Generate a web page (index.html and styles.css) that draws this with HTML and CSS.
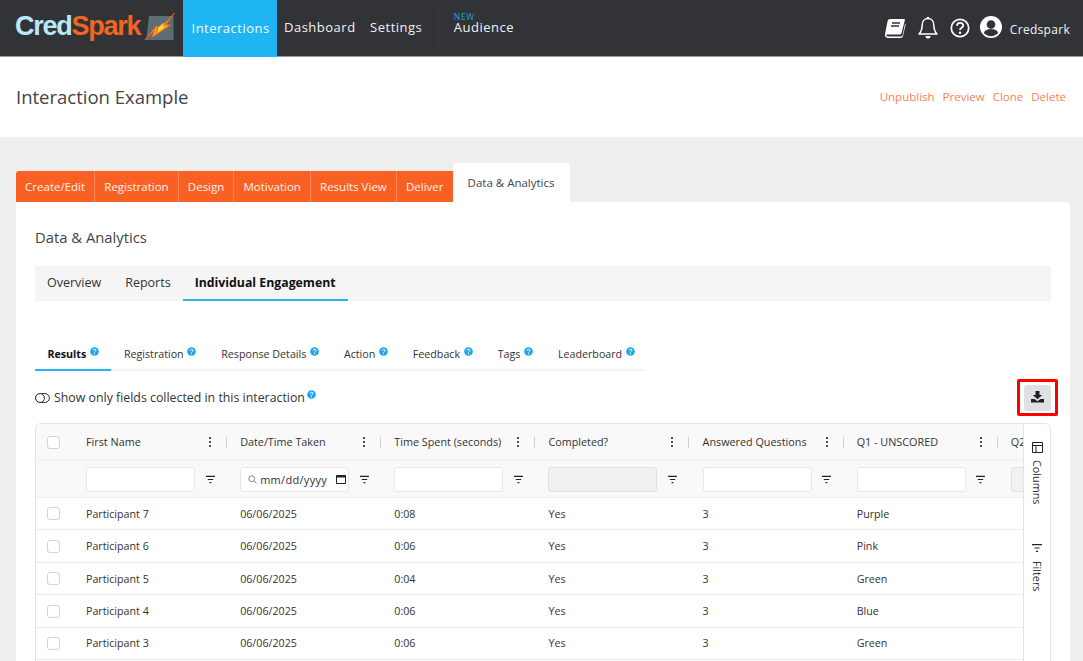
FILE: index.html
```html
<!DOCTYPE html>
<html lang="en">
<head>
<meta charset="utf-8">
<title>Interaction Example</title>
<link rel="stylesheet" href="styles.css">
</head>
<body>
<svg class="defs" width="0" height="0" aria-hidden="true">
  <symbol id="funnel" viewBox="0 0 12 10"><path d="M1 1.500h10M3 5h6M5 8.500h2" fill="none" stroke="currentColor" stroke-width="1.300"/></symbol>
  <symbol id="kebab" viewBox="0 0 4 12"><circle cx="2" cy="2" r="1.100"/><circle cx="2" cy="6" r="1.100"/><circle cx="2" cy="10" r="1.100"/></symbol>
  <symbol id="hint" viewBox="0 0 10 10"><circle cx="5" cy="5" r="4.800" fill="#1ea7e8"/><path d="M3.500 4c0-2 3.200-2 3.200-.2 0 1.100-1.700 1.100-1.700 2.300" fill="none" stroke="#fff" stroke-width="1.100"/><circle cx="5" cy="7.600" r=".7" fill="#fff"/></symbol>
</svg>

<header class="topbar">
  <div class="logo">
    <span class="logo-text"><span class="logo-cred">Cred</span><span class="logo-spark">Spark</span></span>
    <svg class="logo-mark" viewBox="0 0 32 28" width="32" height="28">
      <path d="M6 3h24.500v24H1l2.500-2.500z" fill="#5a6e76"/>
      <path d="M2 27 14 12l.8 5.500L31.500 0 23 11.500l4.500.6L9 24.500l2-6.500z" fill="#f7941d" stroke="#f15a22" stroke-width=".8"/>
      <path d="M15 14.500l6.500-5.500-2 4.200 3 .2-7.500 6z" fill="#ffd23f"/>
    </svg>
  </div>
  <nav class="mainnav">
    <a class="mainnav-item is-active">Interactions</a>
    <a class="mainnav-item">Dashboard</a>
    <a class="mainnav-item">Settings</a>
    <a class="mainnav-item has-badge"><span class="badge-new">NEW</span>Audience</a>
  </nav>
  <div class="userbar">
    <svg class="ico" width="22" height="20" viewBox="0 0 22 20"><path d="M6 1h14c1 0 1 .8.8 1.500L17.500 15c-.3 1-.9 1.500-2 1.500H4c-1.200 0-1.700.6-1.600 1 .1.600.7.900 1.600.900h13c.7 0 1.200-.3 1.500-1l2.600-12c.5.500.6 1 .4 1.800l-2.500 10.700c-.3 1.200-1 2-2.400 2H4C1.800 20 .5 18.500 1 16.300L3.500 3.500C3.900 1.800 4.800 1 6 1z" fill="#fff"/><path d="M8 5h8M7 8h8" stroke="#323337" stroke-width="1.300"/></svg>
    <svg class="ico" width="22" height="24" viewBox="0 0 22 24"><path d="M11 2.500c3.700 0 5.800 2.800 5.800 6.500 0 4.500 1.200 6.800 3.200 9H2c2-2.200 3.200-4.500 3.200-9 0-3.700 2.100-6.500 5.800-6.500z" fill="none" stroke="#fff" stroke-width="1.500" stroke-linejoin="round"/><path d="M8.500 20a2.500 2.500 0 0 0 5 0z" fill="#fff"/><circle cx="11" cy="2" r="1.200" fill="#fff"/></svg>
    <svg class="ico" width="20" height="20" viewBox="0 0 20 20"><circle cx="10" cy="10" r="8.700" fill="none" stroke="#fff" stroke-width="1.700"/><path d="M7 7.800c0-3.800 6.200-3.800 6.200-.3 0 2.300-3.200 2.200-3.200 4.500" fill="none" stroke="#fff" stroke-width="1.900"/><circle cx="10" cy="14.700" r="1.200" fill="#fff"/></svg>
    <svg class="ico" width="22" height="22" viewBox="0 0 22 22"><circle cx="11" cy="11" r="11" fill="#fff"/><circle cx="11" cy="8.500" r="4.300" fill="#323337"/><path d="M3.800 17c1-3 3.600-4 7.200-4s6.200 1 7.200 4c-1.800 2-4.300 3.200-7.200 3.200S5.600 19 3.800 17z" fill="#323337"/></svg>
    <span class="username">Credspark</span>
  </div>
</header>

<section class="pagehead">
  <h1 class="pagehead-title">Interaction Example</h1>
  <div class="pagehead-actions">
    <a>Unpublish</a><a>Preview</a><a>Clone</a><a>Delete</a>
  </div>
</section>

<main class="content">
  <div class="steps">
    <a class="step">Create/Edit</a>
    <a class="step">Registration</a>
    <a class="step">Design</a>
    <a class="step">Motivation</a>
    <a class="step">Results View</a>
    <a class="step step-last">Deliver</a>
    <a class="step-active">Data &amp; Analytics</a>
  </div>

  <div class="card">
    <h2 class="card-title">Data &amp; Analytics</h2>
    <div class="subnav">
      <a class="subnav-item">Overview</a>
      <a class="subnav-item">Reports</a>
      <a class="subnav-item is-active">Individual Engagement</a>
    </div>

    <div class="resulttabs">
      <a class="resulttab is-active">Results <svg class="hint"><use href="#hint"/></svg></a>
      <a class="resulttab">Registration <svg class="hint"><use href="#hint"/></svg></a>
      <a class="resulttab">Response Details <svg class="hint"><use href="#hint"/></svg></a>
      <a class="resulttab">Action <svg class="hint"><use href="#hint"/></svg></a>
      <a class="resulttab">Feedback <svg class="hint"><use href="#hint"/></svg></a>
      <a class="resulttab">Tags <svg class="hint"><use href="#hint"/></svg></a>
      <a class="resulttab">Leaderboard <svg class="hint"><use href="#hint"/></svg></a>
    </div>

    <div class="toolbar">
      <div class="toggle-row">
        <svg class="toggle" width="15" height="10" viewBox="0 0 15 10"><rect x=".6" y=".6" width="13.800" height="8.800" rx="4.400" fill="none" stroke="#333" stroke-width="1"/><circle cx="5" cy="5" r="4.400" fill="#fff" stroke="#333" stroke-width="1"/></svg>
        <span>Show only fields collected in this interaction</span>
        <svg class="hint hint-lg"><use href="#hint"/></svg>
      </div>
      <div class="download-frame">
        <button class="download" type="button" aria-label="Download">
          <svg class="download-ico" width="13" height="12" viewBox="0 0 13 12"><path d="M4.500 0h4v4h2.700L6.500 8.300 1.800 4h2.700z" fill="#222"/><path d="M0 8h3.500l3 2.200 3-2.200H13v3.500H0z" fill="#222"/></svg>
        </button>
      </div>
    </div>

    <div class="table">
      <div class="table-main">
        <div class="t-row t-head">
          <div class="t-check"><span class="checkbox"></span></div>
          <div class="th"><span class="th-label">First Name</span><svg class="kebab"><use href="#kebab"/></svg><i class="th-sep"></i></div>
          <div class="th"><span class="th-label">Date/Time Taken</span><svg class="kebab"><use href="#kebab"/></svg><i class="th-sep"></i></div>
          <div class="th"><span class="th-label">Time Spent (seconds)</span><svg class="kebab"><use href="#kebab"/></svg><i class="th-sep"></i></div>
          <div class="th"><span class="th-label">Completed?</span><svg class="kebab"><use href="#kebab"/></svg><i class="th-sep"></i></div>
          <div class="th"><span class="th-label">Answered Questions</span><svg class="kebab"><use href="#kebab"/></svg><i class="th-sep"></i></div>
          <div class="th"><span class="th-label">Q1 - UNSCORED</span><svg class="kebab"><use href="#kebab"/></svg><i class="th-sep"></i></div>
          <div class="th"><span class="th-label">Q2</span></div>
        </div>
        <div class="t-row t-filter">
          <div class="t-check"></div>
          <div class="tf"><span class="tf-input"></span><svg class="funnel"><use href="#funnel"/></svg></div>
          <div class="tf"><span class="tf-input tf-date"><svg class="lens" width="9" height="9" viewBox="0 0 9 9"><circle cx="3.700" cy="3.700" r="2.900" fill="none" stroke="#777" stroke-width=".9"/><path d="M6 6l2.500 2.500" stroke="#777" stroke-width=".9"/></svg>mm/dd/yyyy<svg class="cal" width="10" height="10" viewBox="0 0 10 10"><path d="M.5 1.500h9v8h-9z" fill="none" stroke="#222" stroke-width="1"/><path d="M.5 1h9v2.500h-9z" fill="#222"/></svg></span><svg class="funnel"><use href="#funnel"/></svg></div>
          <div class="tf"><span class="tf-input"></span><svg class="funnel"><use href="#funnel"/></svg></div>
          <div class="tf"><span class="tf-input is-disabled"></span><svg class="funnel"><use href="#funnel"/></svg></div>
          <div class="tf"><span class="tf-input"></span><svg class="funnel"><use href="#funnel"/></svg></div>
          <div class="tf"><span class="tf-input"></span><svg class="funnel"><use href="#funnel"/></svg></div>
          <div class="tf"><span class="tf-input is-disabled"></span></div>
        </div>
        <div class="t-row t-body">
          <div class="t-check"><span class="checkbox"></span></div>
          <div class="td">Participant 7</div><div class="td">06/06/2025</div><div class="td">0:08</div><div class="td">Yes</div><div class="td">3</div><div class="td">Purple</div>
        </div>
        <div class="t-row t-body">
          <div class="t-check"><span class="checkbox"></span></div>
          <div class="td">Participant 6</div><div class="td">06/06/2025</div><div class="td">0:06</div><div class="td">Yes</div><div class="td">3</div><div class="td">Pink</div>
        </div>
        <div class="t-row t-body">
          <div class="t-check"><span class="checkbox"></span></div>
          <div class="td">Participant 5</div><div class="td">06/06/2025</div><div class="td">0:04</div><div class="td">Yes</div><div class="td">3</div><div class="td">Green</div>
        </div>
        <div class="t-row t-body">
          <div class="t-check"><span class="checkbox"></span></div>
          <div class="td">Participant 4</div><div class="td">06/06/2025</div><div class="td">0:06</div><div class="td">Yes</div><div class="td">3</div><div class="td">Blue</div>
        </div>
        <div class="t-row t-body">
          <div class="t-check"><span class="checkbox"></span></div>
          <div class="td">Participant 3</div><div class="td">06/06/2025</div><div class="td">0:06</div><div class="td">Yes</div><div class="td">3</div><div class="td">Green</div>
        </div>
      </div>
      <aside class="sidebar">
        <div class="side-btn side-columns">
          <svg width="11" height="11" viewBox="0 0 11 11"><path d="M.5.500h10v10H.500zM.5 3.500h10M4 3.500v7" fill="none" stroke="#222" stroke-width="1"/></svg>
          <span class="side-label">Columns</span>
        </div>
        <div class="side-btn side-filters">
          <svg width="10" height="8" viewBox="0 0 10 8"><path d="M0 .7h10M2.500 4h5M4 7.300h2" fill="none" stroke="#222" stroke-width="1.200"/></svg>
          <span class="side-label">Filters</span>
        </div>
      </aside>
    </div>
  </div>
</main>
</body>
</html>
```

FILE: styles.css
```css
* { box-sizing: border-box; }
html, body { margin: 0; height: 661px; overflow: hidden; }
body { font-family: "Open Sans", "Liberation Sans", sans-serif; background: #eeeeee; color: #333; }
a { color: inherit; text-decoration: none; }
.defs { position: absolute; }

/* top bar */
.topbar { display: flex; align-items: stretch; height: 57px; background: #323337; border-bottom: 1px solid #9a9b9e; }
.logo { display: flex; align-items: center; width: 183px; padding-left: 15px; gap: 3px; }
.logo-text { font-family: "Liberation Sans", sans-serif; font-size: 27px; font-weight: 700; letter-spacing: -1.250px; line-height: 1; margin-top: -3px; white-space: nowrap; }
.logo-cred { color: #b9e8f7; }
.logo-spark { color: #f26522; }
.logo-mark { margin-top: -3px; flex: none; }
.mainnav { display: flex; align-items: stretch; color: #fff; font-size: 13px; letter-spacing: .5px; }
.mainnav-item { display: flex; align-items: center; padding: 0 7.500px 2px 7px; color: #f2f2f2; }
.mainnav-item.is-active { background: #1fb5f2; width: 94px; padding: 0 0 2px 8.500px; color: #f4fbff; margin-bottom: -1px; }
.has-badge { position: relative; margin: 8px 0 8px 8px; padding-left: 15px; line-height: 14px; border-left: 1px solid #3b3c40; }
.badge-new { position: absolute; left: 15px; top: 5px; font-size: 8.500px; line-height: 8px; letter-spacing: .7px; color: #1f9fd8; }
.userbar { display: flex; align-items: center; margin-left: auto; padding-right: 13px; }
.ico { flex: none; margin-right: 10px; }
.ico:nth-child(1) { margin-right: 11px; }
.ico:nth-child(2) { margin-right: 11px; margin-top: -1px; }
.ico:nth-child(3) { margin-right: 10px; }
.ico:nth-child(4) { margin-right: 8px; margin-top: -2px; }
.username { color: #f2f2f2; font-size: 12px; letter-spacing: .3px; margin-top: 3px; }

/* page heading */
.pagehead { display: flex; align-items: center; justify-content: space-between; height: 80px; background: #fff; padding: 0 17px 2px 16px; }
.pagehead-title { margin: 0; font-size: 18.500px; font-weight: 400; color: #444; }
.pagehead-actions { display: flex; gap: 8px; font-size: 11.500px; color: #f9805a; }

/* orange step tabs */
.content { padding: 26px 13px 0 16px; }
.steps { display: flex; align-items: flex-end; height: 39px; }
.step { display: flex; align-items: center; justify-content: center; height: 31px; background: #f96124; color: #fdf1ea; font-size: 11.500px; padding: 0 9.100px; border-right: 1px solid #fb8a5a; }
.step:first-child { border-top-left-radius: 3px; }
.step-last { border-right: 0; }
.step-active { display: flex; align-items: flex-start; justify-content: center; height: 39px; width: 117px; background: #fff; color: #444; font-size: 11.500px; padding-top: 12px; border-radius: 3px 3px 0 0; }

/* card */
.card { background: #fff; height: 470px; padding: 24px 19px 0; border-radius: 0 3px 0 0; }
.card-title { margin: 0; font-size: 14.800px; line-height: 22px; font-weight: 400; color: #444; }
.subnav { display: flex; height: 35px; margin-top: 18px; background: #f5f5f5; font-size: 12.500px; color: #333; }
.subnav-item { display: flex; align-items: center; padding: 0 12px; border-bottom: 2px solid transparent; }
.subnav-item.is-active { font-size: 12.300px; font-weight: 700; color: #111; border-bottom-color: #27b3ee; }

.resulttabs { display: flex; width: 611px; height: 35px; margin-top: 35px; border-bottom: 2px solid #f4f4f4; font-size: 10.700px; color: #333; }
.resulttab { display: flex; align-items: center; padding: 2px 12.400px 0; margin-bottom: -2px; border-bottom: 2px solid transparent; white-space: pre; }
.resulttab.is-active { font-weight: 700; color: #111; border-bottom-color: #27b3ee; }
.hint { width: 9px; height: 9px; margin: -5px 0 0 1px; flex: none; }

.toolbar { display: flex; align-items: center; justify-content: space-between; height: 37px; margin-top: 8px; margin-right: -7px; }
.toggle-row { display: flex; align-items: center; gap: 4px; font-size: 12.350px; color: #333; }
.hint-lg { margin-left: -2px; margin-top: -6px; }
.download-frame { display: flex; align-items: center; justify-content: center; width: 41px; height: 37px; border: 3px solid #ff0000; border-radius: 2px; }
.download { display: flex; align-items: center; justify-content: center; width: 27px; height: 26px; padding: 0; border: 0; border-radius: 3px; background: #dfe0e3; }
.download-ico { margin-top: -2px; }

/* table */
.table { display: flex; height: 260px; margin-top: 7px; border: 1px solid #e4e4e4; border-bottom: 0; border-radius: 6px 6px 0 0; overflow: hidden; }
.table-main { flex: 1; min-width: 0; overflow: hidden; }
.t-row { display: grid; grid-template-columns: 50px repeat(7, 154.150px); }
.t-head { height: 37px; background: #f9f9f9; border-bottom: 1px solid #f0f0f0; font-size: 10.800px; color: #333; }
.t-filter { height: 37px; background: #f9f9f9; border-bottom: 1px solid #f0f0f0; }
.t-body { height: 32.450px; background: #fff; border-bottom: 1px solid #ececec; font-size: 10.700px; color: #333; }
.t-check { display: flex; align-items: center; padding-left: 11px; }
.checkbox { width: 13px; height: 13px; background: #fff; border: 1px solid #d4d4d4; border-radius: 3px; }
.th { display: flex; align-items: center; position: relative; white-space: nowrap; }
.th-label { flex: none; margin-top: -1px; }
.kebab { position: absolute; left: 122px; top: 12px; width: 4px; height: 12px; fill: #222; }
.th-sep { position: absolute; left: 140px; top: 13px; width: 1px; height: 11px; background: #d0d0d0; }
.tf { display: flex; align-items: center; }
.tf-input { display: flex; align-items: center; width: 109px; height: 25px; background: #fff; border: 1px solid #e8e8e8; border-radius: 3px; font-size: 11px; color: #333; letter-spacing: .3px; }
.tf-input.is-disabled { background: #f1f1f1; border-color: #e0e0e0; }
.tf-date { padding: 0 2px 0 7px; }
.lens { margin-right: 3px; flex: none; }
.cal { margin-left: 9px; flex: none; }
.funnel { width: 11px; height: 9px; margin: 1px 0 0 9.500px; color: #222; flex: none; }
.td { display: flex; align-items: center; white-space: nowrap; }

.sidebar { flex: none; width: 27px; background: #fff; border-left: 1px solid #e4e4e4; display: flex; flex-direction: column; align-items: center; padding-top: 18px; }
.side-btn { display: flex; flex-direction: column; align-items: center; gap: 7px; }
.side-filters { margin-top: 40px; gap: 9px; }
.side-label { writing-mode: vertical-rl; font-size: 10.800px; color: #333; line-height: 12px; }
```
